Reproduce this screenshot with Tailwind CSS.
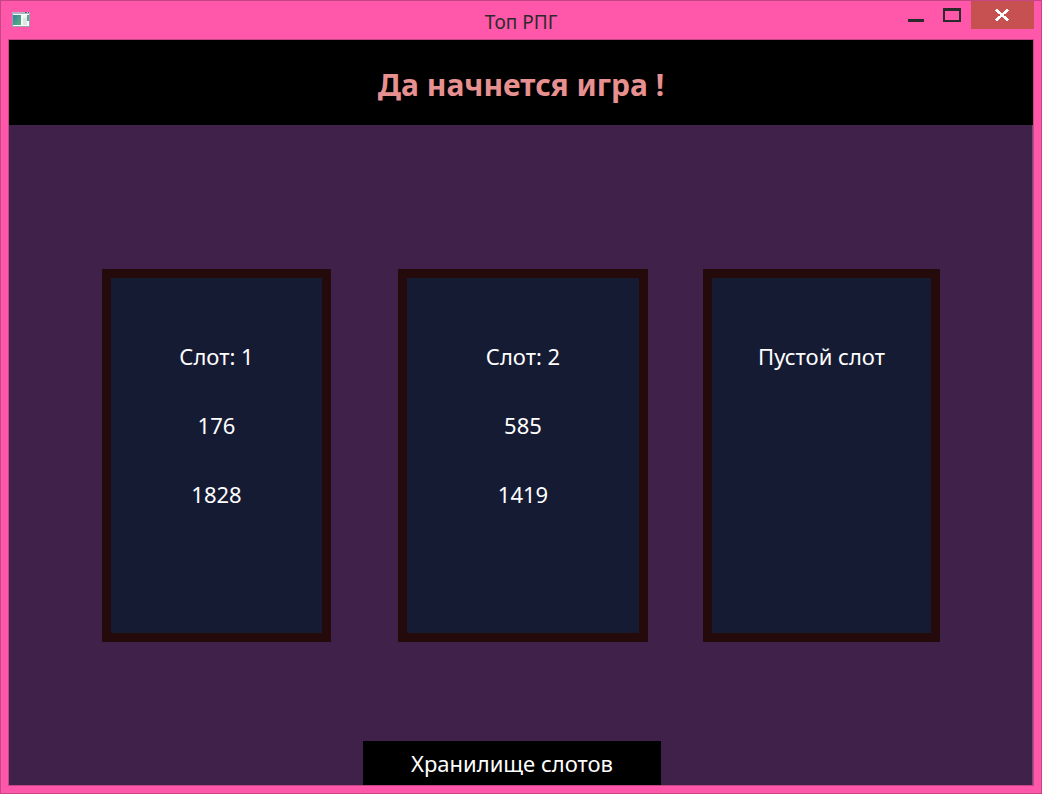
<!DOCTYPE html>
<html lang="ru">
<head>
<meta charset="utf-8">
<title>Топ РПГ</title>
<script src="https://cdn.jsdelivr.net/npm/@tailwindcss/browser@4"></script>
</head>
<body class="flex min-h-screen flex-col border border-[#c64585] bg-[#ff57a9] px-[7px] pb-[7px] font-['Noto_Sans','Open_Sans',sans-serif]">
  <header class="grid h-[38px] grid-cols-[1fr_auto_1fr] items-start">
    <svg class="mt-2 ml-1 h-[20px] w-[20px]" viewBox="0 0 20 20" aria-hidden="true">
      <defs>
        <linearGradient id="pane" x1="0" y1="0" x2="1" y2="1"><stop offset="0" stop-color="#3c7fa0"/><stop offset="1" stop-color="#55b67a"/></linearGradient>
      </defs>
      <rect x="0" y="3" width="18" height="15" fill="#9a9fb0"/>
      <rect x="0" y="3" width="18" height="2" fill="#b0b5c4"/>
      <rect x="13" y="3" width="2" height="1" fill="#4f6688"/>
      <rect x="16" y="3" width="1" height="1" fill="#4f6688"/>
      <rect x="1" y="5" width="16" height="12" fill="#f7f9f9"/>
      <rect x="1" y="6" width="8" height="10" fill="url(#pane)"/>
      <rect x="11" y="6" width="4" height="3" fill="#f0f2f3"/>
      <rect x="11" y="9" width="4" height="7" fill="#dfe3e4"/>
      <rect x="15" y="6" width="2" height="6" fill="#5aa893"/>
    </svg>
    <h1 class="pt-[7px] text-[19px] leading-[28px] text-[#2b2b2b]">Топ РПГ</h1>
    <div class="flex justify-end">
      <button type="button" aria-label="Свернуть" class="h-7 w-9">
        <svg class="h-7 w-9" viewBox="0 0 36 28" aria-hidden="true"><rect x="9" y="18" width="16" height="3" fill="#2b2b2b"/></svg>
      </button>
      <button type="button" aria-label="Развернуть" class="h-7 w-9">
        <svg class="h-7 w-9" viewBox="0 0 36 28" aria-hidden="true"><path fill="#2b2b2b" fill-rule="evenodd" d="M8 7h18v14H8zM10 10v9h14v-9z"/></svg>
      </button>
      <button type="button" aria-label="Закрыть" class="h-7 w-[63px] bg-[#c75050]">
        <svg class="h-7 w-[63px]" viewBox="0 0 63 28" aria-hidden="true" shape-rendering="crispEdges"><path fill="none" stroke="#fff" stroke-width="2.6" d="M25 8.500L37 19.500M37 8.500L25 19.500"/></svg>
      </button>
    </div>
  </header>

  <div class="flex flex-1 flex-col border border-[#c64585] bg-[#3f214a]">
    <h2 class="h-[85px] bg-black pt-[25px] text-center text-[30px] leading-[40px] font-bold text-[#e79090]">Да начнется игра !</h2>
    <main class="flex flex-1 flex-col border-r border-[#6c5272] pt-36 text-[22px] leading-[69px] text-white">
      <div class="flex flex-1 pr-[92px] pl-[93px] text-center">
        <section class="mr-[67px] flex-[211_1_0px] border-[9px] border-[#240a0a] bg-[#161b34] pt-11">
          <h3>Слот: 1</h3>
          <p>176</p>
          <p>1828</p>
        </section>
        <section class="mr-[55px] flex-[232_1_0px] border-[9px] border-[#240a0a] bg-[#161b34] pt-11">
          <h3>Слот: 2</h3>
          <p>585</p>
          <p>1419</p>
        </section>
        <section class="flex-[219_1_0px] border-[9px] border-[#240a0a] bg-[#161b34] pt-11">
          <h3>Пустой слот</h3>
        </section>
      </div>
      <footer class="flex justify-center pt-[99px] pr-[17px]">
        <button type="button" class="h-11 w-[298px] bg-black leading-[40px]">Хранилище слотов</button>
      </footer>
    </main>
  </div>
</body>
</html>
